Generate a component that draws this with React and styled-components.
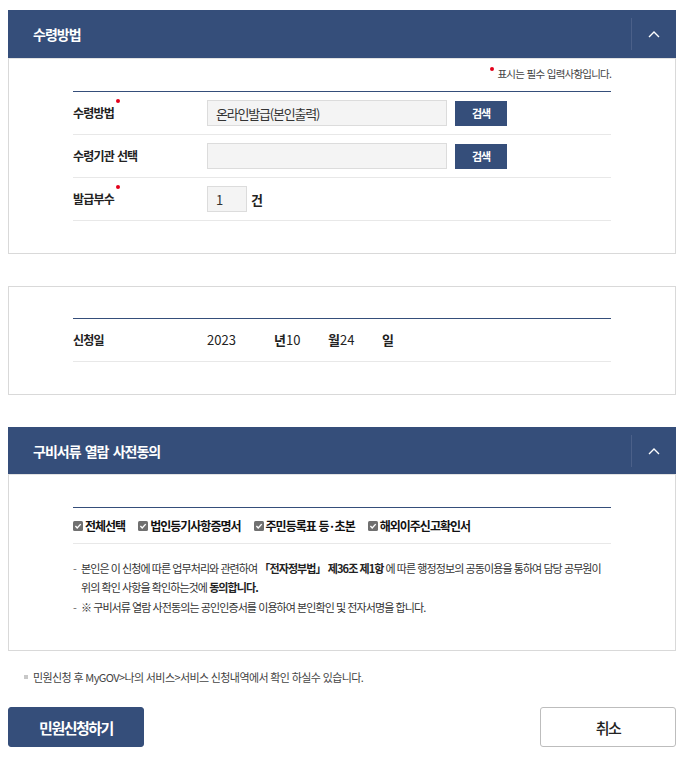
import React from 'react';
import styled, { createGlobalStyle } from 'styled-components';

const NAVY = '#354e7a';
const FONT = '"Noto Sans CJK KR", "Noto Sans", sans-serif';

const Global = createGlobalStyle`
  html, body { margin: 0; padding: 0; background: #fff; }
  body { font-family: ${FONT}; color: #222; }
  * { box-sizing: border-box; }
`;

const Page = styled.div`
  padding: 10px 8px 14px;
  display: flex;
  flex-direction: column;
`;

const Section = styled.section`
  display: flex;
  flex-direction: column;
  margin-top: ${p => p.$mt || 0}px;
`;

const Header = styled.div`
  height: ${p => p.$h || 48}px;
  background: ${NAVY};
  display: flex;
  align-items: center;
  justify-content: space-between;
`;

const HeaderTitle = styled.h2`
  margin: 0 0 0 25px;
  font-size: 14px;
  font-weight: 700;
  letter-spacing: -1px;
  word-spacing: 2px;
  color: #fff;
  line-height: 20px;
`;

const Toggle = styled.button`
  width: 45px;
  height: 32px;
  border: none;
  border-left: 1px solid #4b6089;
  background: transparent;
  display: flex;
  align-items: center;
  justify-content: center;
  padding: 0;
  cursor: pointer;
`;

const Body = styled.div`
  border: 1px solid #d9d9d9;
  border-top-color: ${p => (p.$top ? '#d9d9d9' : '#e2e2e2')};
  padding: ${p => p.$pad};
`;

const RequiredNote = styled.p`
  margin: 0 0 9px;
  text-align: right;
  font-size: 10.5px;
  letter-spacing: -0.8px;
  word-spacing: 1px;
  line-height: 16px;
  color: #444;
`;

const Dot = styled.span`
  display: inline-block;
  width: 4px;
  height: 4px;
  border-radius: 50%;
  background: #e3001b;
  vertical-align: top;
  margin: 0 ${p => p.$mr || 0}px 0 ${p => p.$ml || 0}px;
  position: relative;
  top: ${p => p.$top || 0}px;
`;

const Table = styled.div`
  border-top: 1px solid ${NAVY};
  display: flex;
  flex-direction: column;
`;

const Row = styled.div`
  display: flex;
  align-items: center;
  height: ${p => (p.$h || 42) + 1}px;
  border-bottom: 1px solid #e8e8e8;
`;

const Label = styled.div`
  width: 134px;
  flex: none;
  font-size: 12px;
  font-weight: 700;
  letter-spacing: -0.8px;
  word-spacing: 1px;
  line-height: 16px;
  color: #222;
`;

const Value = styled.div`
  display: flex;
  align-items: center;
  gap: 8px;
`;

const Field = styled.div`
  width: ${p => p.$w || 240}px;
  height: 26px;
  background: #f4f4f4;
  border: 1px solid #dcdcdc;
  padding: 0 0 0 8px;
  display: flex;
  align-items: center;
  font-size: 13px;
  letter-spacing: -1.2px;
  color: #333;
`;

const SearchBtn = styled.button`
  width: 52px;
  height: 25px;
  border: none;
  background: ${NAVY};
  color: #fff;
  font-family: ${FONT};
  font-size: 11px;
  font-weight: 700;
  letter-spacing: -1px;
  padding: 0;
  cursor: pointer;
`;

const Unit = styled.span`
  font-size: 13px;
  font-weight: 700;
  letter-spacing: -1px;
  color: #222;
  margin-left: -4px;
`;

const DateNum = styled.span`
  width: ${p => p.$w}px;
  font-size: 13px;
  color: #222;
  flex: none;
`;

const DateRow = styled.div`
  display: flex;
  align-items: center;
  line-height: 16px;
`;

const DateUnit = styled.span`
  width: 12px;
  font-size: 13px;
  font-weight: 700;
  letter-spacing: -1px;
  flex: none;
  color: #222;
`;

const CheckList = styled.div`
  display: flex;
  align-items: center;
  gap: 13px;
`;

const CheckItem = styled.label`
  display: flex;
  align-items: center;
  gap: 2px;
  font-size: 12px;
  font-weight: 700;
  letter-spacing: -1px;
  word-spacing: 1px;
  color: #111;
  line-height: 16px;
`;

const Notes = styled.ul`
  list-style: none;
  margin: 15px 0 0;
  padding: 0;
  display: flex;
  flex-direction: column;
  gap: 1px;
`;

const NoteItem = styled.li`
  display: flex;
  font-size: 11px;
  letter-spacing: -0.9px;
  word-spacing: 0.5px;
  line-height: 19px;
  color: #333;
`;

const Dash = styled.span`
  width: 8px;
  flex: none;
  color: #666;
`;

const Strong = styled.b`
  font-weight: 700;
  color: #222;
`;

const FooterNote = styled.p`
  margin: 18px 0 0 16px;
  display: flex;
  align-items: center;
  gap: 5px;
  font-size: 11px;
  letter-spacing: -0.6px;
  word-spacing: 0.5px;
  line-height: 16px;
  color: #444;
`;

const Square = styled.span`
  width: 4px;
  height: 4px;
  background: #c8c8c8;
  flex: none;
`;

const Actions = styled.div`
  margin-top: 22px;
  display: flex;
  justify-content: space-between;
`;

const ActionBtn = styled.button`
  width: 136px;
  height: 40px;
  border-radius: 3px;
  border: 1px solid ${p => (p.$primary ? NAVY : '#bdbdbd')};
  background: ${p => (p.$primary ? NAVY : '#fff')};
  color: ${p => (p.$primary ? '#fff' : '#222')};
  font-family: ${FONT};
  font-size: 15px;
  font-weight: ${p => (p.$primary ? 700 : 500)};
  letter-spacing: -1.5px;
  padding: 0;
  cursor: pointer;
`;

const Chevron = () => (
  <svg width="12" height="8" viewBox="0 0 12 8" fill="none">
    <polyline points="1,7 6,2 11,7" stroke="#fff" strokeWidth="1.4" />
  </svg>
);

const CheckBox = () => (
  <svg width="10" height="10" viewBox="0 0 10 10">
    <rect width="10" height="10" rx="1.5" fill="#707070" />
    <polyline points="2.4,5.1 4.2,7 7.7,3.1" fill="none" stroke="#fff" strokeWidth="1.4" />
  </svg>
);

const checks = ['전체선택', '법인등기사항증명서', '주민등록표 등·초본', '해외이주신고확인서'];

export default function App() {
  return (
    <>
      <Global />
      <Page>
        <Section>
          <Header>
            <HeaderTitle>수령방법</HeaderTitle>
            <Toggle aria-label="접기"><Chevron /></Toggle>
          </Header>
          <Body $pad="7px 64px 32px">
            <RequiredNote>
              <Dot $mr={3} $top={1} />표시는 필수 입력사항입니다.
            </RequiredNote>
            <Table>
              <Row>
                <Label>수령방법<Dot $ml={2} $top={-6} /></Label>
                <Value>
                  <Field>온라인발급(본인출력)</Field>
                  <SearchBtn>검색</SearchBtn>
                </Value>
              </Row>
              <Row>
                <Label>수령기관 선택</Label>
                <Value>
                  <Field />
                  <SearchBtn>검색</SearchBtn>
                </Value>
              </Row>
              <Row>
                <Label>발급부수<Dot $ml={2} $top={-6} /></Label>
                <Value>
                  <Field $w={40}>1</Field>
                  <Unit>건</Unit>
                </Value>
              </Row>
            </Table>
          </Body>
        </Section>

        <Section $mt={32}>
          <Body $top $pad="31px 64px 32px">
            <Table>
              <Row>
                <Label>신청일</Label>
                <DateRow>
                  <DateNum $w={67}>2023</DateNum>
                  <DateUnit>년</DateUnit>
                  <DateNum $w={42}>10</DateNum>
                  <DateUnit>월</DateUnit>
                  <DateNum $w={42}>24</DateNum>
                  <DateUnit>일</DateUnit>
                </DateRow>
              </Row>
            </Table>
          </Body>
        </Section>

        <Section $mt={32}>
          <Header $h={47}>
            <HeaderTitle>구비서류 열람 사전동의</HeaderTitle>
            <Toggle aria-label="접기"><Chevron /></Toggle>
          </Header>
          <Body $pad="32px 64px 33px">
            <Table>
              <Row $h={35}>
                <CheckList>
                  {checks.map(c => (
                    <CheckItem key={c}>
                      <CheckBox />
                      {c}
                    </CheckItem>
                  ))}
                </CheckList>
              </Row>
            </Table>
            <Notes>
              <NoteItem>
                <Dash>-</Dash>
                <span>
                  본인은 이 신청에 따른 업무처리와 관련하여 <Strong>「전자정부법」 제36조 제1항</Strong> 에 따른 행정정보의 공동이용을 통하여 담당 공무원이
                  <br />
                  위의 확인 사항을 확인하는것에 <Strong>동의합니다.</Strong>
                </span>
              </NoteItem>
              <NoteItem>
                <Dash>-</Dash>
                <span>※ 구비서류 열람 사전동의는 공인인증서를 이용하여 본인확인 및 전자서명을 합니다.</span>
              </NoteItem>
            </Notes>
          </Body>
        </Section>

        <FooterNote>
          <Square />
          민원신청 후 MyGOV&gt;나의 서비스&gt;서비스 신청내역에서 확인 하실수 있습니다.
        </FooterNote>

        <Actions>
          <ActionBtn $primary>민원신청하기</ActionBtn>
          <ActionBtn>취소</ActionBtn>
        </Actions>
      </Page>
    </>
  );
}
